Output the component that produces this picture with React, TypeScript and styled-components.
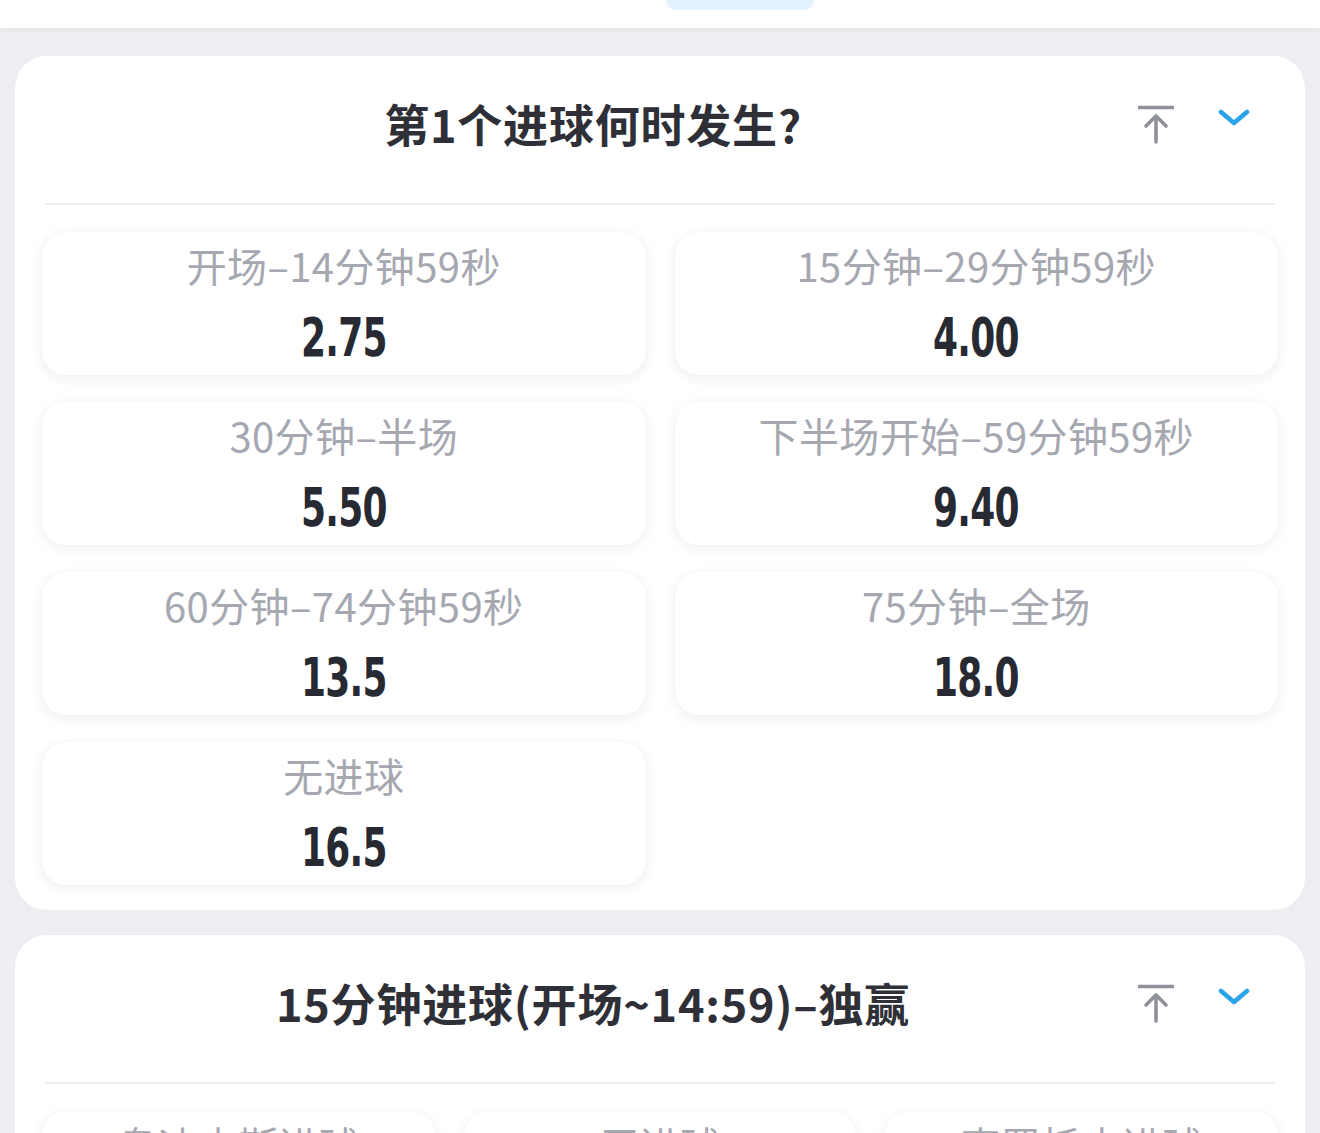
import React from "react";
import styled, { createGlobalStyle } from "styled-components";

const Global = createGlobalStyle`
  html, body { margin: 0; padding: 0; background: #eeeef2; }
  body { font-family: "Noto Sans CJK SC", "Noto Sans", sans-serif; }
  * { box-sizing: border-box; }
`;

const Page = styled.div`
  width: 1320px;
  min-height: 1133px;
  background: #eeeef2;
  display: flex;
  flex-direction: column;
`;

const TopBar = styled.div`
  height: 28px;
  background: #ffffff;
  display: flex;
  justify-content: center;
  box-shadow: 0 2px 6px rgba(0, 0, 0, 0.05);
  position: relative;
  z-index: 1;
`;

const TabBlob = styled.div`
  width: 148px;
  height: 10px;
  margin-left: 160px;
  background: #e2f2fc;
  border-radius: 0 0 40px 40px;
`;

const List = styled.div`
  display: flex;
  flex-direction: column;
  gap: 25px;
  padding: 28px 15px 0 15px;
`;

const Card = styled.section`
  background: #ffffff;
  border-radius: 32px;
  padding: 0 27px 25px 27px;
`;

const Header = styled.div`
  height: 149px;
  display: flex;
  align-items: center;
  padding: 0 25px 12px 3px;
  border-bottom: 2px solid #ebebf0;
  margin: 0 3px;
`;

const Title = styled.h2`
  flex: 1;
  margin: 0;
  text-align: center;
  font-family: "Noto Sans CJK SC", "Noto Sans", sans-serif;
  font-weight: 700;
  font-size: 45px;
  line-height: 60px;
  color: #2e2f37;
  letter-spacing: 0.8px;
`;

const Icons = styled.div`
  display: flex;
  align-items: center;
  gap: 44px;
`;

const IconSvg = styled.svg<{ $lift?: number }>`
  display: block;
  margin-bottom: ${(p) => (p.$lift ? p.$lift * 2 : 0)}px;
`;

const Grid = styled.div<{ $cols: number }>`
  display: grid;
  grid-template-columns: repeat(${(p) => p.$cols}, 1fr);
  column-gap: 29px;
  row-gap: 27px;
  margin-top: 27px;
`;

const Cell = styled.div`
  height: 143px;
  background: #ffffff;
  border-radius: 24px;
  box-shadow: 0 3px 14px rgba(30, 30, 60, 0.07), 0 0 2px rgba(30, 30, 60, 0.04);
  display: flex;
  flex-direction: column;
  align-items: center;
  padding-top: 8px;
`;

const Label = styled.div`
  font-family: "Noto Sans CJK SC", "Noto Sans", sans-serif;
  font-size: 40px;
  line-height: 50px;
  color: #a6a8b1;
  white-space: nowrap;
  letter-spacing: 0.4px;
`;

const Value = styled.div`
  margin-top: 17px;
  font-family: "DejaVu Sans Condensed", "Liberation Sans", sans-serif;
  font-weight: 700;
  font-size: 54px;
  line-height: 62px;
  color: #282a33;
  transform: scaleX(0.74);
  letter-spacing: -1px;
`;

const ToTopIcon = () => (
  <IconSvg width="36" height="40" viewBox="0 0 36 40" fill="none">
    <path d="M1 3.5H35" stroke="#8f9199" strokeWidth="3.6" strokeLinecap="round" />
    <path d="M18 13V38" stroke="#8f9199" strokeWidth="3.6" strokeLinecap="round" />
    <path d="M8 22L18 12L28 22" stroke="#8f9199" strokeWidth="3.6" strokeLinecap="round" strokeLinejoin="round" />
  </IconSvg>
);

const ChevronIcon = () => (
  <IconSvg $lift={6} width="32" height="20" viewBox="0 0 32 20" fill="none">
    <path d="M3 4L16 15L29 4" stroke="#2ba3e8" strokeWidth="4.6" strokeLinecap="round" strokeLinejoin="round" />
  </IconSvg>
);

type Option = { label: string; odds: string };

const market1: Option[] = [
  { label: "开场–14分钟59秒", odds: "2.75" },
  { label: "15分钟–29分钟59秒", odds: "4.00" },
  { label: "30分钟–半场", odds: "5.50" },
  { label: "下半场开始–59分钟59秒", odds: "9.40" },
  { label: "60分钟–74分钟59秒", odds: "13.5" },
  { label: "75分钟–全场", odds: "18.0" },
  { label: "无进球", odds: "16.5" },
];

const market2: Option[] = [
  { label: "乌迪内斯进球", odds: "6.20" },
  { label: "无进球", odds: "1.30" },
  { label: "克罗托内进球", odds: "5.80" },
];

const Market = ({ title, options, cols }: { title: string; options: Option[]; cols: number }) => (
  <Card>
    <Header>
      <Title>{title}</Title>
      <Icons>
        <ToTopIcon />
        <ChevronIcon />
      </Icons>
    </Header>
    <Grid $cols={cols}>
      {options.map((o) => (
        <Cell key={o.label}>
          <Label>{o.label}</Label>
          <Value>{o.odds}</Value>
        </Cell>
      ))}
    </Grid>
  </Card>
);

export default function App() {
  return (
    <Page>
      <Global />
      <TopBar>
        <TabBlob />
      </TopBar>
      <List>
        <Market title="第1个进球何时发生?" options={market1} cols={2} />
        <Market title="15分钟进球(开场~14:59)–独赢" options={market2} cols={3} />
      </List>
    </Page>
  );
}
